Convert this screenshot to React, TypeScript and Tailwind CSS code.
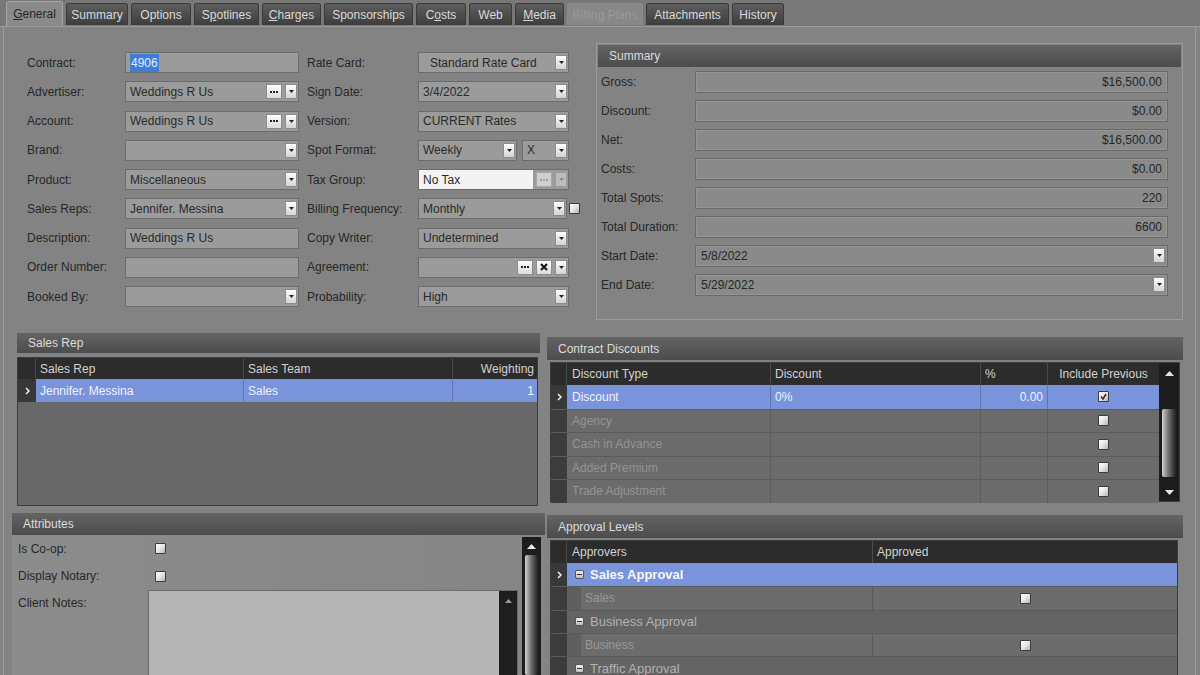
import React from 'react'

// Contract editor - "General" tab

type Btn = 'drop' | 'dropOff' | 'dots' | 'dotsOff' | 'x'

const TABS = [
  { label: 'General', u: 0, w: 'w-[57px]', active: true },
  { label: 'Summary', u: -1, w: 'w-[62px]' },
  { label: 'Options', u: -1, w: 'w-[60px]' },
  { label: 'Spotlines', u: 1, w: 'w-[65px]' },
  { label: 'Charges', u: 0, w: 'w-[59px]' },
  { label: 'Sponsorships', u: -1, w: 'w-[89px]' },
  { label: 'Costs', u: 1, w: 'w-[50px]' },
  { label: 'Web', u: -1, w: 'w-[43px]' },
  { label: 'Media', u: 0, w: 'w-[49px]' },
  { label: 'Billing Plans', u: -1, w: 'w-[76px]', disabled: true },
  { label: 'Attachments', u: -1, w: 'w-[83px]' },
  { label: 'History', u: -1, w: 'w-[52px]' },
]

function TabLabel({ label, u }: { label: string; u: number }) {
  if (u < 0) return <>{label}</>
  return (
    <>
      {label.slice(0, u)}
      <span className="underline">{label[u]}</span>
      {label.slice(u + 1)}
    </>
  )
}

function Arrow({ off, color }: { off?: boolean; color?: string }) {
  return (
    <svg width="5" height="3" viewBox="0 0 5 3">
      <path d="M0 0h5L2.5 3z" fill={color ?? (off ? '#8a8a8a' : '#222')} />
    </svg>
  )
}

function FieldButton({ kind }: { kind: Btn }) {
  if (kind === 'drop' || kind === 'dropOff') {
    const off = kind === 'dropOff'
    return (
      <span
        className={`flex h-[15px] w-[12px] shrink-0 items-center justify-center border ${
          off ? 'border-[#9a9a9a] bg-[#bcbcbc]' : 'border-[#8c8c8c] bg-gradient-to-b from-[#fdfdfd] to-[#d4d4d4]'
        }`}
      >
        <Arrow off={off} />
      </span>
    )
  }
  if (kind === 'x') {
    return (
      <span className="flex h-[15px] w-[16px] shrink-0 items-center justify-center border border-[#8c8c8c] bg-gradient-to-b from-[#fdfdfd] to-[#dcdcdc]">
        <svg width="8" height="8" viewBox="0 0 8 8">
          <path d="M1 1l6 6M7 1L1 7" stroke="#111" strokeWidth="2" />
        </svg>
      </span>
    )
  }
  const off = kind === 'dotsOff'
  return (
    <span
      className={`flex h-[15px] w-[16px] shrink-0 items-center justify-center gap-[1px] border ${
        off ? 'border-[#a8a8a8] bg-[#cfcfcf]' : 'border-[#8c8c8c] bg-gradient-to-b from-[#fdfdfd] to-[#dcdcdc]'
      }`}
    >
      {[0, 1, 2].map((i) => (
        <span key={i} className={`h-[2px] w-[2px] ${off ? 'bg-[#a0a0a0]' : 'bg-[#222]'}`} />
      ))}
    </span>
  )
}

function Field({
  value,
  w,
  btns = [],
  white,
  pad = 'pl-[4px]',
}: {
  value?: React.ReactNode
  w: string
  btns?: Btn[]
  white?: boolean
  pad?: string
}) {
  return (
    <div className={`flex h-[21px] shrink-0 items-center gap-[3px] border border-[#6c6c6c] bg-[#9b9b9b] pr-[1px] ${w}`}>
      <div
        className={`flex h-full min-w-0 flex-1 items-center overflow-hidden whitespace-nowrap text-[12px] text-[#2a2a2a] ${pad} ${
          white ? 'bg-[#f3f3f3]' : ''
        }`}
      >
        {value}
      </div>
      {btns.map((b, i) => (
        <FieldButton key={i} kind={b} />
      ))}
    </div>
  )
}

function Check({ checked }: { checked?: boolean }) {
  return (
    <span className="flex h-[11px] w-[11px] items-center justify-center rounded-[1px] border border-[#3c3c3c] bg-gradient-to-br from-[#ffffff] via-[#e6e6e6] to-[#b4b4b4]">
      {checked && (
        <svg width="7" height="7" viewBox="0 0 7 7">
          <path d="M1 3.5l2 2.5 3-5" stroke="#5a2020" strokeWidth="1.6" fill="none" />
        </svg>
      )}
    </span>
  )
}

function PanelHeader({ title, h }: { title: string; h: string }) {
  return (
    <div className={`flex items-center bg-gradient-to-b from-[#646464] to-[#4c4c4c] pl-[11px] text-[12px] text-[#dcdcdc] ${h}`}>
      {title}
    </div>
  )
}

function Chevron() {
  return (
    <svg width="5" height="8" viewBox="0 0 5 8">
      <path d="M1 1l3 3-3 3" stroke="#f2f2f2" strokeWidth="1.5" fill="none" />
    </svg>
  )
}

function MinusBox() {
  return (
    <span className="flex h-[9px] w-[9px] items-center justify-center rounded-[2px] border border-[#555] bg-gradient-to-b from-[#f4f4f4] to-[#bdbdbd]">
      <span className="h-[1px] w-[5px] bg-[#333]" />
    </span>
  )
}

const FORM: [string, React.ReactNode, string, React.ReactNode][] = [
  [
    'Contract:',
    <Field w="w-[174px]" value={<span className="bg-[#3d7fd6] px-[1px] text-[#e3ecff]">4906</span>} />,
    'Rate Card:',
    <Field w="w-[151px]" value="Standard Rate Card" pad="pl-[11px]" btns={['drop']} />,
  ],
  [
    'Advertiser:',
    <Field w="w-[174px]" value="Weddings R Us" btns={['dots', 'drop']} />,
    'Sign Date:',
    <Field w="w-[151px]" value="3/4/2022" btns={['drop']} />,
  ],
  [
    'Account:',
    <Field w="w-[174px]" value="Weddings R Us" btns={['dots', 'drop']} />,
    'Version:',
    <Field w="w-[151px]" value="CURRENT Rates" btns={['drop']} />,
  ],
  [
    'Brand:',
    <Field w="w-[174px]" btns={['drop']} />,
    'Spot Format:',
    <div className="flex gap-[5px]">
      <Field w="w-[99px]" value="Weekly" btns={['drop']} />
      <Field w="w-[47px]" value="X" btns={['drop']} />
    </div>,
  ],
  [
    'Product:',
    <Field w="w-[174px]" value="Miscellaneous" btns={['drop']} />,
    'Tax Group:',
    <Field w="w-[151px]" value="No Tax" white btns={['dotsOff', 'dropOff']} />,
  ],
  [
    'Sales Reps:',
    <Field w="w-[174px]" value="Jennifer. Messina" btns={['drop']} />,
    'Billing Frequency:',
    <div className="flex items-center gap-[2px]">
      <Field w="w-[149px]" value="Monthly" btns={['drop']} />
      <Check />
    </div>,
  ],
  [
    'Description:',
    <Field w="w-[174px]" value="Weddings R Us" />,
    'Copy Writer:',
    <Field w="w-[151px]" value="Undetermined" btns={['drop']} />,
  ],
  [
    'Order Number:',
    <Field w="w-[174px]" />,
    'Agreement:',
    <Field w="w-[151px]" btns={['dots', 'x', 'drop']} />,
  ],
  [
    'Booked By:',
    <Field w="w-[174px]" btns={['drop']} />,
    'Probability:',
    <Field w="w-[151px]" value="High" btns={['drop']} />,
  ],
]

const SUMMARY: [string, string, boolean?][] = [
  ['Gross:', '$16,500.00'],
  ['Discount:', '$0.00'],
  ['Net:', '$16,500.00'],
  ['Costs:', '$0.00'],
  ['Total Spots:', '220'],
  ['Total Duration:', '6600'],
  ['Start Date:', '5/8/2022', true],
  ['End Date:', '5/29/2022', true],
]

const DISCOUNTS = ['Agency', 'Cash in Advance', 'Added Premium', 'Trade Adjustment']

function Scrollbar({ h, thumbTop, thumbH }: { h: string; thumbTop: string; thumbH: string }) {
  return (
    <div className={`flex w-[20px] shrink-0 flex-col items-center bg-[#1c1c1c] ${h}`}>
      <div className="flex h-[20px] items-center">
        <svg width="9" height="5" viewBox="0 0 9 5">
          <path d="M0 5h9L4.5 0z" fill="#e8e8e8" />
        </svg>
      </div>
      <div className={`w-[14px] rounded-[2px] bg-gradient-to-r from-[#d2d2d2] via-[#6a6a6a] to-[#202020] ${thumbTop} ${thumbH}`} />
      <div className="flex-1" />
      <div className="flex h-[18px] items-center">
        <svg width="9" height="5" viewBox="0 0 9 5">
          <path d="M0 0h9L4.5 5z" fill="#e8e8e8" />
        </svg>
      </div>
    </div>
  )
}

export default function App() {
  return (
    <div className="flex h-[675px] w-[1200px] flex-col overflow-hidden bg-[#838383] font-['Liberation_Sans',Arial,sans-serif] text-[12px] text-[#272727]">
      {/* tab strip */}
      <div className="flex h-[27px] shrink-0 items-end gap-[3px] border-b border-[#9c9c9c] bg-[#787878] pl-[6px]">
        {TABS.map((t) =>
          t.active ? (
            <div
              key={t.label}
              className={`flex h-[25px] items-center justify-center rounded-t-[3px] border border-b-0 border-[#a5a5a5] bg-[#8a8a8a] text-[#262626] ${t.w}`}
            >
              <TabLabel label={t.label} u={t.u} />
            </div>
          ) : (
            <div
              key={t.label}
              className={`mb-[1px] flex h-[22px] items-center justify-center rounded-t-[3px] border border-b-0 ${t.w} ${
                t.disabled
                  ? 'border-[#8c8c8c] bg-[#888888] text-[#9a9a9a] blur-[0.6px]'
                  : 'border-[#3a3a3a] bg-gradient-to-b from-[#5e5e5e] to-[#3e3e3e] text-[#dadada]'
              }`}
            >
              <TabLabel label={t.label} u={t.u} />
            </div>
          )
        )}
      </div>

      <div className="ml-[3px] flex w-[1193px] flex-1 flex-col border-l border-r border-[#9c9c9c]">
        {/* top: form + summary */}
        <div className="flex h-[301px] shrink-0">
          <div className="w-[592px] shrink-0 pl-[23px] pt-[21px]">
            {FORM.map(([l1, f1, l2, f2]) => (
              <div key={l1} className="flex h-[29.25px] items-center">
                <div className="w-[98px] shrink-0">{l1}</div>
                {f1}
                <div className="ml-[8px] w-[111px] shrink-0">{l2}</div>
                {f2}
              </div>
            ))}
          </div>
          <div className="mt-[16px] h-[277px] w-[587px] shrink-0 border border-[#9b9b9b] px-[1px] pt-[1px]">
            <PanelHeader title="Summary" h="h-[22px]" />
            {SUMMARY.map(([label, value, drop]) => (
              <div key={label} className="flex h-[29px] items-center pl-[3px]">
                <div className="w-[94px] shrink-0">{label}</div>
                <div className="flex h-[22px] w-[473px] items-center border border-[#6a6a6a] bg-[#8a8a8a] shadow-[inset_0_0_0_1px_#959595]">
                  {drop ? (
                    <>
                      <span className="flex-1 pl-[5px]">{value}</span>
                      <span className="mr-[2px]">
                        <FieldButton kind="drop" />
                      </span>
                    </>
                  ) : (
                    <span className="flex-1 pr-[5px] text-right">{value}</span>
                  )}
                </div>
              </div>
            ))}
          </div>
        </div>

        {/* middle: sales rep + contract discounts */}
        <div className="flex h-[182px] shrink-0">
          <div className="ml-[13px] mt-[5px] w-[523px] shrink-0">
            <PanelHeader title="Sales Rep" h="h-[20px]" />
            <div className="mt-[4px] h-[149px] w-[521px] border border-[#3c3c3c] bg-[#686868]">
              <div className="flex h-[21px] bg-[#2c2c2c] text-[#d2d2d2]">
                <div className="w-[18px] border-r border-[#4a4a4a]" />
                <div className="flex w-[208px] items-center border-r border-[#4a4a4a] pl-[4px]">Sales Rep</div>
                <div className="flex w-[209px] items-center border-r border-[#4a4a4a] pl-[4px]">Sales Team</div>
                <div className="flex flex-1 items-center justify-end pr-[3px]">Weighting</div>
              </div>
              <div className="flex h-[23px] text-[#eef2ff]">
                <div className="flex w-[18px] items-center justify-center bg-[#383838]">
                  <Chevron />
                </div>
                <div className="flex w-[208px] items-center border-r border-[#5f76b8] bg-[#7a94dc] pl-[4px]">Jennifer. Messina</div>
                <div className="flex w-[209px] items-center border-r border-[#5f76b8] bg-[#7a94dc] pl-[4px]">Sales</div>
                <div className="flex flex-1 items-center justify-end bg-[#7a94dc] pr-[3px]">1</div>
              </div>
            </div>
          </div>

          <div className="ml-[7px] mt-[9px] w-[636px] shrink-0">
            <PanelHeader title="Contract Discounts" h="h-[23px]" />
            <div className="ml-[3px] mt-[2px] flex h-[140px] w-[630px] border border-[#3c3c3c]">
              <div className="flex-1 bg-[#666666]">
                <div className="flex h-[22px] bg-[#2c2c2c] text-[#d2d2d2]">
                  <div className="w-[16px] border-r border-[#4a4a4a]" />
                  <div className="flex w-[204px] items-center border-r border-[#4a4a4a] pl-[5px]">Discount Type</div>
                  <div className="flex w-[210px] items-center border-r border-[#4a4a4a] pl-[4px]">Discount</div>
                  <div className="flex w-[67px] items-center border-r border-[#4a4a4a] pl-[4px]">%</div>
                  <div className="flex flex-1 items-center justify-center">Include Previous</div>
                </div>
                <div className="flex h-[23.5px] text-[#eef2ff]">
                  <div className="flex w-[16px] items-center justify-center bg-[#383838]">
                    <Chevron />
                  </div>
                  <div className="flex w-[204px] items-center border-r border-[#5f76b8] bg-[#7a94dc] pl-[5px]">Discount</div>
                  <div className="flex w-[210px] items-center border-r border-[#5f76b8] bg-[#7a94dc] pl-[4px]">0%</div>
                  <div className="flex w-[67px] items-center justify-end border-r border-[#5f76b8] bg-[#7a94dc] pr-[4px]">0.00</div>
                  <div className="flex flex-1 items-center justify-center bg-[#7a94dc]">
                    <Check checked />
                  </div>
                </div>
                {DISCOUNTS.map((d) => (
                  <div key={d} className="flex h-[23.5px] border-t border-[#5c5c5c] bg-[#6b6b6b] text-[#949494]">
                    <div className="w-[16px] bg-[#3c3c3c]" />
                    <div className="flex w-[204px] items-center border-r border-[#5c5c5c] pl-[5px]">{d}</div>
                    <div className="w-[210px] border-r border-[#5c5c5c]" />
                    <div className="w-[67px] border-r border-[#5c5c5c]" />
                    <div className="flex flex-1 items-center justify-center">
                      <Check />
                    </div>
                  </div>
                ))}
              </div>
              <Scrollbar h="h-full" thumbTop="mt-[26px]" thumbH="h-[68px]" />
            </div>
          </div>
        </div>

        {/* bottom: attributes + approval levels */}
        <div className="flex flex-1">
          <div className="ml-[8px] mt-[3px] w-[533px] shrink-0">
            <PanelHeader title="Attributes" h="h-[22px]" />
            <div className="flex h-[160px] bg-gradient-to-r from-[#8c8c8c] to-[#858585]">
              <div className="flex-1 pl-[6px]">
                <div className="flex h-[27px] items-center">
                  <div className="w-[137px]">Is Co-op:</div>
                  <Check />
                </div>
                <div className="flex h-[28px] items-center">
                  <div className="w-[137px]">Display Notary:</div>
                  <Check />
                </div>
                <div className="flex">
                  <div className="w-[130px] pt-[4px]">Client Notes:</div>
                  <div className="flex h-[100px] flex-1 border border-[#6a6a6a]">
                    <div className="flex-1 bg-[#b5b5b5]" />
                    <div className="flex w-[18px] justify-center bg-[#1e1e1e] pt-[8px]">
                      <svg width="7" height="4" viewBox="0 0 7 4">
                        <path d="M0 4h7L3.5 0z" fill="#9a9a9a" />
                      </svg>
                    </div>
                  </div>
                </div>
              </div>
              <div className="ml-[4px] mr-[4px] mt-[2px] flex w-[19px] flex-col items-center bg-[#1c1c1c]">
                <div className="flex h-[18px] items-center">
                  <svg width="9" height="5" viewBox="0 0 9 5">
                    <path d="M0 5h9L4.5 0z" fill="#e8e8e8" />
                  </svg>
                </div>
                <div className="h-[120px] w-[13px] rounded-[2px] bg-gradient-to-r from-[#d2d2d2] via-[#6a6a6a] to-[#202020]" />
              </div>
            </div>
          </div>

          <div className="ml-[2px] mt-[5px] w-[636px] shrink-0">
            <PanelHeader title="Approval Levels" h="h-[23px]" />
            <div className="ml-[3px] mt-[2px] h-[160px] w-[628px] border border-[#3c3c3c] bg-[#666666]">
              <div className="flex h-[22px] bg-[#2c2c2c] text-[#d2d2d2]">
                <div className="w-[16px] border-r border-[#4a4a4a]" />
                <div className="flex w-[306px] items-center border-r border-[#4a4a4a] pl-[5px]">Approvers</div>
                <div className="flex flex-1 items-center pl-[4px]">Approved</div>
              </div>
              <div className="flex h-[23.3px]">
                <div className="flex w-[16px] items-center justify-center bg-[#383838]">
                  <Chevron />
                </div>
                <div className="flex flex-1 items-center gap-[6px] bg-[#7a94dc] pl-[8px] text-[13px] font-bold text-[#f4f6ff]">
                  <MinusBox />
                  Sales Approval
                </div>
              </div>
              {[
                ['Sales', 'Business Approval'],
                ['Business', 'Traffic Approval'],
              ].map(([child, group]) => (
                <React.Fragment key={child}>
                  <div className="flex h-[23.3px] border-t border-[#5a5a5a] text-[#989898]">
                    <div className="w-[16px] bg-[#3c3c3c]" />
                    <div className="w-[14px] bg-[#5f5f5f]" />
                    <div className="flex w-[292px] items-center border-r border-[#5a5a5a] bg-[#6c6c6c] pl-[4px]">{child}</div>
                    <div className="flex flex-1 items-center justify-center bg-[#6c6c6c]">
                      <Check />
                    </div>
                  </div>
                  <div className="flex h-[23.3px] border-t border-[#5a5a5a]">
                    <div className="w-[16px] bg-[#3c3c3c]" />
                    <div className="flex flex-1 items-center gap-[6px] bg-[#646464] pl-[8px] text-[13px] text-[#b2b2b2]">
                      <MinusBox />
                      {group}
                    </div>
                  </div>
                </React.Fragment>
              ))}
            </div>
          </div>
        </div>
      </div>
    </div>
  )
}
